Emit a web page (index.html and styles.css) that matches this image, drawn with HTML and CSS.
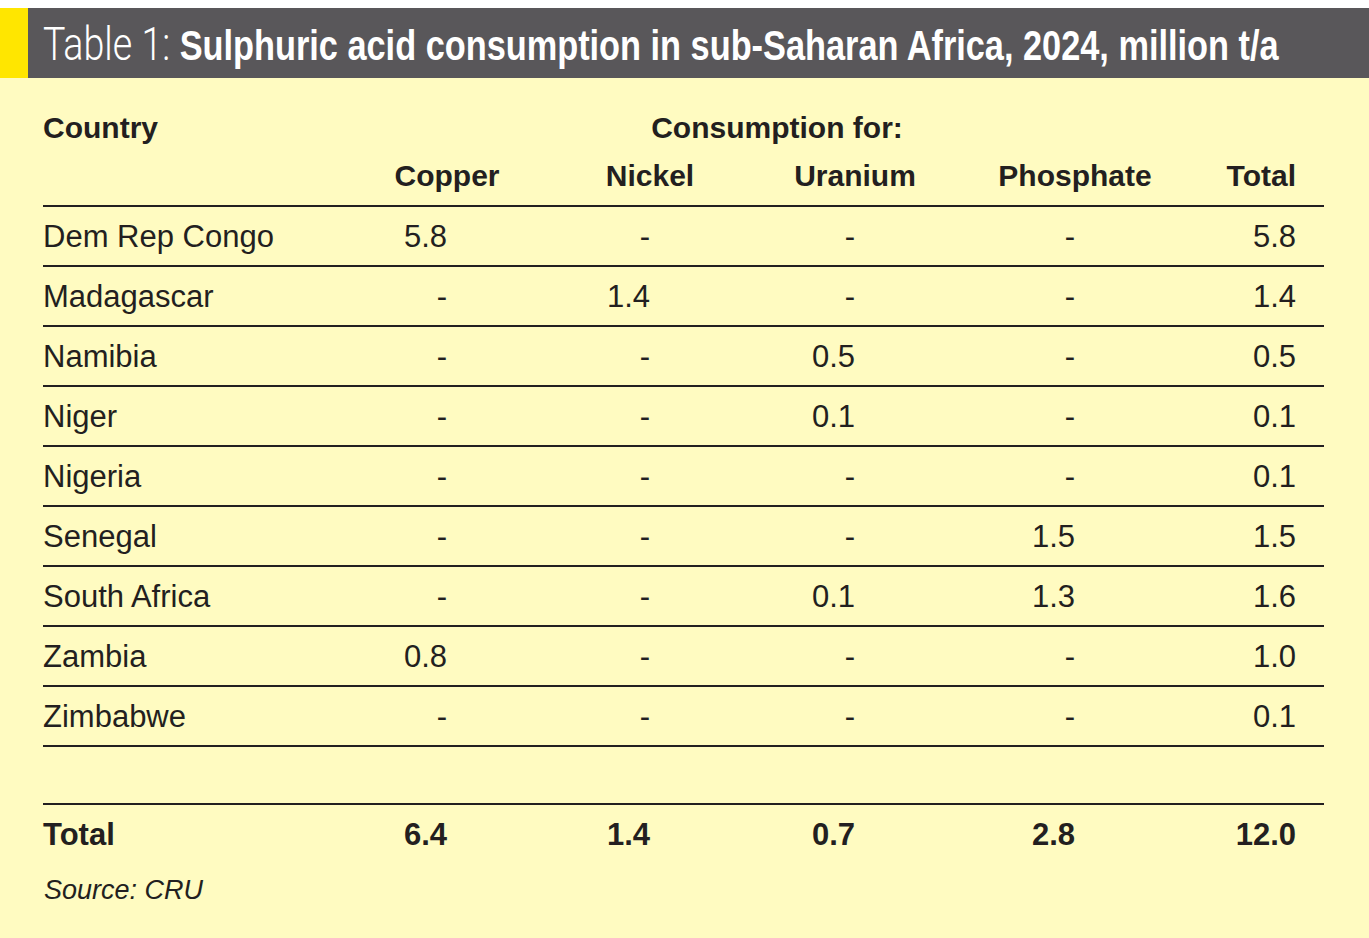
FILE: index.html
```
<!DOCTYPE html>
<html lang="en">
<head>
<meta charset="utf-8">
<title>Table 1</title>
<link rel="stylesheet" href="styles.css">
</head>
<body>
<div class="page">
  <header class="titlebar">
    <div class="stripe"></div>
    <h1 class="title"><span class="title-inner"><span class="lead">Table 1:</span> <span class="main">Sulphuric acid consumption in sub-Saharan Africa, 2024, million t/a</span></span></h1>
  </header>
  <div class="table">
    <div class="head1 c-country">Country</div>
    <div class="head1 c-cons">Consumption for:</div>
    <div class="head2 c-blank"></div>
    <div class="head2 c-copper">Copper</div>
    <div class="head2 c-nickel">Nickel</div>
    <div class="head2 c-uranium">Uranium</div>
    <div class="head2 c-phos">Phosphate</div>
    <div class="head2 c-total">Total</div>

    <div class="cell name">Dem Rep Congo</div><div class="cell num p1">5.8</div><div class="cell num p2">-</div><div class="cell num p3">-</div><div class="cell num p4">-</div><div class="cell num p5">5.8</div>
    <div class="cell name">Madagascar</div><div class="cell num p1">-</div><div class="cell num p2">1.4</div><div class="cell num p3">-</div><div class="cell num p4">-</div><div class="cell num p5">1.4</div>
    <div class="cell name">Namibia</div><div class="cell num p1">-</div><div class="cell num p2">-</div><div class="cell num p3">0.5</div><div class="cell num p4">-</div><div class="cell num p5">0.5</div>
    <div class="cell name">Niger</div><div class="cell num p1">-</div><div class="cell num p2">-</div><div class="cell num p3">0.1</div><div class="cell num p4">-</div><div class="cell num p5">0.1</div>
    <div class="cell name">Nigeria</div><div class="cell num p1">-</div><div class="cell num p2">-</div><div class="cell num p3">-</div><div class="cell num p4">-</div><div class="cell num p5">0.1</div>
    <div class="cell name">Senegal</div><div class="cell num p1">-</div><div class="cell num p2">-</div><div class="cell num p3">-</div><div class="cell num p4">1.5</div><div class="cell num p5">1.5</div>
    <div class="cell name">South Africa</div><div class="cell num p1">-</div><div class="cell num p2">-</div><div class="cell num p3">0.1</div><div class="cell num p4">1.3</div><div class="cell num p5">1.6</div>
    <div class="cell name">Zambia</div><div class="cell num p1">0.8</div><div class="cell num p2">-</div><div class="cell num p3">-</div><div class="cell num p4">-</div><div class="cell num p5">1.0</div>
    <div class="cell name">Zimbabwe</div><div class="cell num p1">-</div><div class="cell num p2">-</div><div class="cell num p3">-</div><div class="cell num p4">-</div><div class="cell num p5">0.1</div>

    <div class="spacer"></div>

    <div class="tot name">Total</div><div class="tot num p1">6.4</div><div class="tot num p2">1.4</div><div class="tot num p3">0.7</div><div class="tot num p4">2.8</div><div class="tot num p5">12.0</div>
  </div>
  <p class="source">Source: CRU</p>
</div>
</body>
</html>
```
FILE: styles.css
```
html, body {
  margin: 0;
  padding: 0;
}
body {
  background: #fffbc1;
  color: #231f20;
  font-family: "Liberation Sans", Arial, sans-serif;
  width: 1369px;
  height: 938px;
  overflow: hidden;
}
.page {
  border-top: 8px solid #ffffff;
}
.titlebar {
  display: flex;
  height: 70px;
  background: #59575a;
}
.stripe {
  width: 28px;
  background: #ffe600;
  flex: none;
}
.title {
  flex: 1;
  min-width: 0;
  overflow: hidden;
  margin: 0;
  padding-left: 15px;
  color: #ffffff;
  font-size: 42px;
  line-height: 72px;
  white-space: nowrap;
  font-weight: normal;
}
.title-inner {
  display: inline-block;
  transform: scaleX(0.817);
  transform-origin: left center;
}
.title .lead {
  font-family: "Roboto", "Liberation Sans", sans-serif;
  font-weight: 300;
  font-size: 46px;
}
.title .main {
  font-family: "Liberation Sans", Arial, sans-serif;
  font-weight: bold;
}
.table {
  display: grid;
  grid-template-columns: 304px 200px 206px 204px 236px 131px;
  margin-left: 43px;
  width: 1281px;
  margin-top: 28px;
}
.head1 {
  font-weight: bold;
  font-size: 30px;
  height: 45px;
  line-height: 44px;
}
.c-country { grid-column: 1; }
.c-cons { grid-column: 2 / 6; text-align: center; padding-left: 14px; }
.head2 {
  font-weight: bold;
  font-size: 30px;
  height: 54px;
  line-height: 50px;
  border-bottom: 2px solid #231f20;
  text-align: center;
  white-space: nowrap;
}
.c-blank { grid-column: 1; }
.c-total { text-align: right; padding-right: 28px; }
.cell, .tot {
  font-size: 31px;
  height: 58px;
  line-height: 59px;
  border-bottom: 2px solid #231f20;
  white-space: nowrap;
}
.tot {
  font-weight: bold;
  border-bottom: none;
}
.num { text-align: right; }
.p1 { padding-right: 100px; }
.p2 { padding-right: 103px; }
.p3 { padding-right: 102px; }
.p4 { padding-right: 118px; }
.p5 { padding-right: 28px; }
.spacer {
  grid-column: 1 / 7;
  height: 56px;
  border-bottom: 2px solid #231f20;
}
.source {
  margin: 12px 0 0 44px;
  font-size: 27px;
  font-style: italic;
}
```
